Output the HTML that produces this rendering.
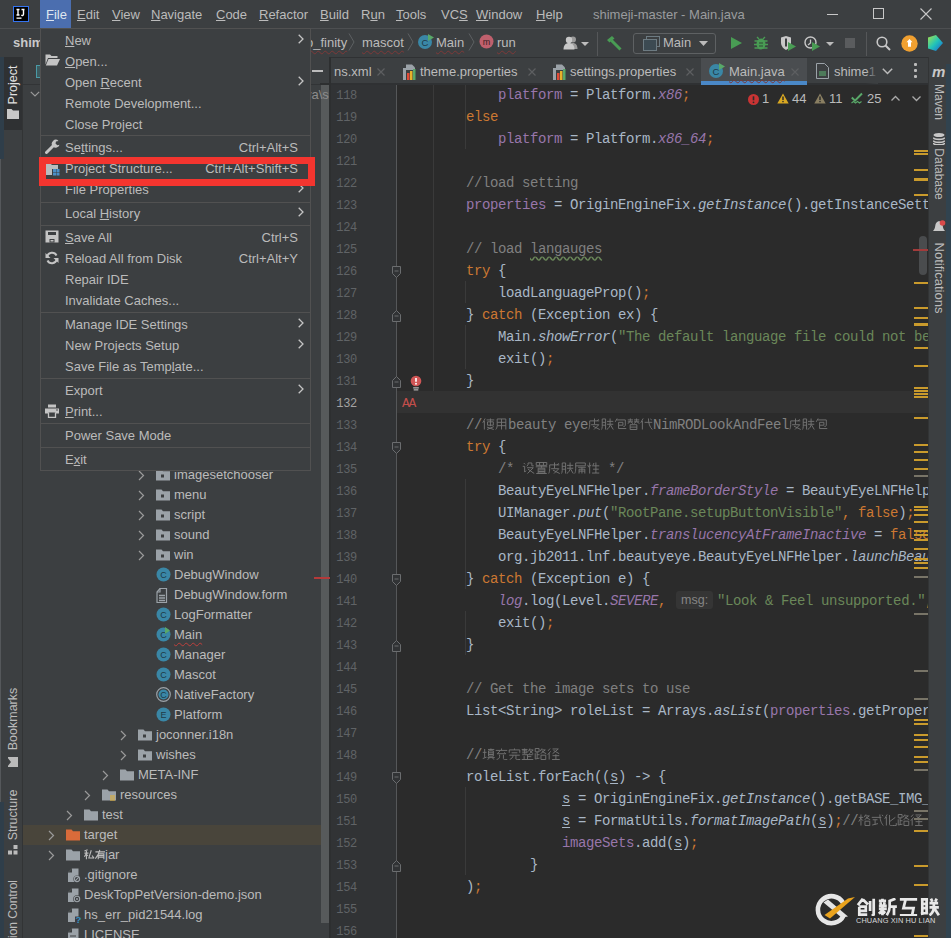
<!DOCTYPE html>
<html><head><meta charset="utf-8">
<style>
*{margin:0;padding:0;box-sizing:border-box}
html,body{width:951px;height:938px;overflow:hidden;background:#3c3f41;font-family:"Liberation Sans",sans-serif;font-size:13px;color:#bbbbbb}
.a{position:absolute}
.t{position:absolute;white-space:pre;line-height:16px}
u{text-decoration:underline;text-underline-offset:1px}
/* bars */
#menubar{left:0;top:0;width:951px;height:28px;background:#3c3f41}
#navbar{left:0;top:28px;width:951px;height:30px;background:#3c3f41;border-top:1px solid #4d4f51;border-bottom:1px solid #2f3133}
#lstrip{left:0;top:57px;width:23px;height:881px;background:#3c3f41;border-right:1px solid #323435}
#proj{left:23px;top:57px;width:306px;height:881px;background:#3c3f41}
#tabs{left:329px;top:58px;width:599px;height:27px;background:#3c3f41;border-bottom:2px solid #2f3133}
#editor{left:329px;top:85px;width:599px;height:853px;background:#2b2b2b;overflow:hidden}
#gutter{left:0;top:0;width:68px;height:853px;background:#313335}
#rstrip{left:928px;top:57px;width:23px;height:881px;background:#3c3f41;border-left:1px solid #323435}
/* code */
.ln{position:absolute;margin-top:2px;left:0;width:28px;text-align:right;font-family:"Liberation Mono",monospace;font-size:12px;letter-spacing:-0.3px;color:#606366;line-height:22px}
.cl{position:absolute;left:73px;white-space:pre;font-family:"Liberation Mono",monospace;font-size:14px;letter-spacing:-0.4px;color:#a9b7c6;line-height:22px}
.k{color:#cc7832}.f{color:#9876aa}.s{color:#6a8759}.c{color:#808080}.i{font-style:italic}
.ln.cur{color:#a4a3a3}
.err{color:#c24e4b;letter-spacing:-1.2px;font-size:13px}
.hint{display:inline-block;margin:0 4px 0 10px;width:37px;height:18px;line-height:18px;vertical-align:1px;text-align:center;letter-spacing:0;background:#353535;color:#858585;font-family:"Liberation Sans",sans-serif;font-size:12.5px;border-radius:3px}
.ul{text-decoration:underline;text-underline-offset:2px}
.wv{text-decoration:underline wavy #6a8759;text-underline-offset:3px}
.cjt{display:inline-block;width:10.5px;height:11px;margin-right:0;vertical-align:-1px;border:1px solid #999;border-width:1px 0;background:linear-gradient(90deg,transparent 4px,#aaa 4px 5px,transparent 5px)}
.cj{display:inline-block;width:13px;height:11px;vertical-align:-1px;background:repeating-linear-gradient(0deg,currentColor 0 1px,transparent 1px 3px);opacity:.55}
/* menu */
#menu{left:40px;top:28px;width:271px;height:443px;background:#3c3f41;border:1px solid #515151}
.mi{position:absolute;left:24px;white-space:pre;line-height:21px;color:#bbbbbb}
.sc{position:absolute;right:12px;white-space:pre;line-height:21px;color:#bbbbbb}
.sep{position:absolute;left:0;width:269px;height:1px;background:#515151}
.arr{position:absolute;left:258px;width:7px;height:9px}
</style></head><body>

<!-- MENU BAR -->
<div id="menubar" class="a">
  <svg class="a" style="left:13px;top:6px" width="16" height="16" viewBox="0 0 16 16"><rect x="0.5" y="0.5" width="15" height="15" fill="#000" stroke="#3574f0" stroke-width="1"/><path d="M3.5 3.5h3M5 3.5v5.5M3.5 9h3M8.5 3.5h3M10.5 3.5v4.5c0 1.5-1 1.8-2.2 1.2" stroke="#fff" stroke-width="1.4" fill="none"/><rect x="3.5" y="11.5" width="5" height="1.3" fill="#fff"/></svg>
  <div class="a" style="left:40px;top:0;width:31px;height:28px;background:#4b6eaf"></div>
  <div class="t" style="left:46px;top:7px;color:#dfe6f0"><u>F</u>ile</div>
  <div class="t" style="left:77px;top:7px"><u>E</u>dit</div>
  <div class="t" style="left:112px;top:7px"><u>V</u>iew</div>
  <div class="t" style="left:151px;top:7px"><u>N</u>avigate</div>
  <div class="t" style="left:216px;top:7px"><u>C</u>ode</div>
  <div class="t" style="left:259px;top:7px"><u>R</u>efactor</div>
  <div class="t" style="left:320px;top:7px"><u>B</u>uild</div>
  <div class="t" style="left:361px;top:7px">R<u>u</u>n</div>
  <div class="t" style="left:396px;top:7px"><u>T</u>ools</div>
  <div class="t" style="left:441px;top:7px">VC<u>S</u></div>
  <div class="t" style="left:476px;top:7px"><u>W</u>indow</div>
  <div class="t" style="left:536px;top:7px"><u>H</u>elp</div>
  <div class="t" style="left:593px;top:7px;color:#9a9c9e">shimeji-master - Main.java</div>
</div>

<div id="navbar" class="a"></div>
<div id="lstrip" class="a"></div>
<div id="proj" class="a"></div>
<svg class="a" style="left:138px;top:470px" width="7" height="11" viewBox="0 0 7 11"><path d="M1 1l4.5 4.5L1 10" stroke="#9a9a9a" stroke-width="1.2" fill="none"/></svg>
<div class="a" style="left:156px;top:469px;line-height:0"><svg width="14" height="12" viewBox="0 0 14 12"><path d="M0 0.5h5.5l1.5 1.8H14V11.5H0z" fill="#9ba2a8"/><rect x="5" y="5.5" width="3" height="3" fill="#3c3f41"/></svg></div>
<div class="t" style="left:174px;top:467px;">imagesetchooser</div>
<svg class="a" style="left:138px;top:490px" width="7" height="11" viewBox="0 0 7 11"><path d="M1 1l4.5 4.5L1 10" stroke="#9a9a9a" stroke-width="1.2" fill="none"/></svg>
<div class="a" style="left:156px;top:489px;line-height:0"><svg width="14" height="12" viewBox="0 0 14 12"><path d="M0 0.5h5.5l1.5 1.8H14V11.5H0z" fill="#9ba2a8"/><rect x="5" y="5.5" width="3" height="3" fill="#3c3f41"/></svg></div>
<div class="t" style="left:174px;top:487px;">menu</div>
<svg class="a" style="left:138px;top:510px" width="7" height="11" viewBox="0 0 7 11"><path d="M1 1l4.5 4.5L1 10" stroke="#9a9a9a" stroke-width="1.2" fill="none"/></svg>
<div class="a" style="left:156px;top:509px;line-height:0"><svg width="14" height="12" viewBox="0 0 14 12"><path d="M0 0.5h5.5l1.5 1.8H14V11.5H0z" fill="#9ba2a8"/><rect x="5" y="5.5" width="3" height="3" fill="#3c3f41"/></svg></div>
<div class="t" style="left:174px;top:507px;">script</div>
<svg class="a" style="left:138px;top:530px" width="7" height="11" viewBox="0 0 7 11"><path d="M1 1l4.5 4.5L1 10" stroke="#9a9a9a" stroke-width="1.2" fill="none"/></svg>
<div class="a" style="left:156px;top:529px;line-height:0"><svg width="14" height="12" viewBox="0 0 14 12"><path d="M0 0.5h5.5l1.5 1.8H14V11.5H0z" fill="#9ba2a8"/><rect x="5" y="5.5" width="3" height="3" fill="#3c3f41"/></svg></div>
<div class="t" style="left:174px;top:527px;">sound</div>
<svg class="a" style="left:138px;top:550px" width="7" height="11" viewBox="0 0 7 11"><path d="M1 1l4.5 4.5L1 10" stroke="#9a9a9a" stroke-width="1.2" fill="none"/></svg>
<div class="a" style="left:156px;top:549px;line-height:0"><svg width="14" height="12" viewBox="0 0 14 12"><path d="M0 0.5h5.5l1.5 1.8H14V11.5H0z" fill="#9ba2a8"/><rect x="5" y="5.5" width="3" height="3" fill="#3c3f41"/></svg></div>
<div class="t" style="left:174px;top:547px;">win</div>
<div class="a" style="left:156px;top:567px;line-height:0"><svg width="15" height="15" viewBox="0 0 15 15"><circle cx="7.5" cy="7.5" r="7" fill="#3a87a6"/><text x="7.5" y="11" text-anchor="middle" font-family="Liberation Sans" font-size="9" fill="#1f3a46">C</text></svg></div>
<div class="t" style="left:174px;top:567px;">DebugWindow</div>
<div class="a" style="left:156px;top:588px;line-height:0"><svg width="14" height="15" viewBox="0 0 14 15"><path d="M4 0.5h6.5V14.5H1V4z" fill="none" stroke="#9ba2a8" stroke-width="1.2"/><path d="M1 4h3V0.5" fill="none" stroke="#9ba2a8" stroke-width="1.2"/><path d="M3 7.5h6M3 10h6M3 12.5h6" stroke="#9ba2a8" stroke-width="1.4"/></svg></div>
<div class="t" style="left:174px;top:587px;">DebugWindow.form</div>
<div class="a" style="left:156px;top:607px;line-height:0"><svg width="15" height="15" viewBox="0 0 15 15"><circle cx="7.5" cy="7.5" r="7" fill="#3a87a6"/><text x="7.5" y="11" text-anchor="middle" font-family="Liberation Sans" font-size="9" fill="#1f3a46">C</text></svg></div>
<div class="t" style="left:174px;top:607px;">LogFormatter</div>
<div class="a" style="left:156px;top:627px;line-height:0"><svg width="15" height="15" viewBox="0 0 15 15"><circle cx="7.5" cy="7.5" r="7" fill="#3a87a6"/><text x="7.5" y="11" text-anchor="middle" font-family="Liberation Sans" font-size="9" fill="#1f3a46">C</text><path d="M9 0l5 3.5-5 3.5z" fill="#59a869"/></svg></div>
<div class="t" style="left:174px;top:627px;text-decoration:underline wavy #bc3f3c;text-underline-offset:3px;text-decoration-thickness:1px">Main</div>
<div class="a" style="left:156px;top:647px;line-height:0"><svg width="15" height="15" viewBox="0 0 15 15"><circle cx="7.5" cy="7.5" r="7" fill="#3a87a6"/><text x="7.5" y="11" text-anchor="middle" font-family="Liberation Sans" font-size="9" fill="#1f3a46">C</text></svg></div>
<div class="t" style="left:174px;top:647px;">Manager</div>
<div class="a" style="left:156px;top:667px;line-height:0"><svg width="15" height="15" viewBox="0 0 15 15"><circle cx="7.5" cy="7.5" r="7" fill="#3a87a6"/><text x="7.5" y="11" text-anchor="middle" font-family="Liberation Sans" font-size="9" fill="#1f3a46">C</text></svg></div>
<div class="t" style="left:174px;top:667px;">Mascot</div>
<div class="a" style="left:156px;top:687px;line-height:0"><svg width="15" height="15" viewBox="0 0 15 15"><circle cx="7.5" cy="7.5" r="6.8" fill="none" stroke="#9ba2a8" stroke-width="1.2"/><circle cx="7.5" cy="7.5" r="5" fill="#3a87a6"/><text x="7.5" y="11" text-anchor="middle" font-family="Liberation Sans" font-size="9" fill="#1f3a46">C</text></svg></div>
<div class="t" style="left:174px;top:687px;">NativeFactory</div>
<div class="a" style="left:156px;top:707px;line-height:0"><svg width="15" height="15" viewBox="0 0 15 15"><circle cx="7.5" cy="7.5" r="7" fill="#3a87a6"/><text x="7.5" y="11" text-anchor="middle" font-family="Liberation Sans" font-size="9" fill="#1f3a46">E</text></svg></div>
<div class="t" style="left:174px;top:707px;">Platform</div>
<svg class="a" style="left:120px;top:730px" width="7" height="11" viewBox="0 0 7 11"><path d="M1 1l4.5 4.5L1 10" stroke="#9a9a9a" stroke-width="1.2" fill="none"/></svg>
<div class="a" style="left:138px;top:729px;line-height:0"><svg width="14" height="12" viewBox="0 0 14 12"><path d="M0 0.5h5.5l1.5 1.8H14V11.5H0z" fill="#9ba2a8"/><rect x="5" y="5.5" width="3" height="3" fill="#3c3f41"/></svg></div>
<div class="t" style="left:156px;top:727px;">joconner.i18n</div>
<svg class="a" style="left:120px;top:750px" width="7" height="11" viewBox="0 0 7 11"><path d="M1 1l4.5 4.5L1 10" stroke="#9a9a9a" stroke-width="1.2" fill="none"/></svg>
<div class="a" style="left:138px;top:749px;line-height:0"><svg width="14" height="12" viewBox="0 0 14 12"><path d="M0 0.5h5.5l1.5 1.8H14V11.5H0z" fill="#9ba2a8"/><rect x="5" y="5.5" width="3" height="3" fill="#3c3f41"/></svg></div>
<div class="t" style="left:156px;top:747px;">wishes</div>
<svg class="a" style="left:102px;top:770px" width="7" height="11" viewBox="0 0 7 11"><path d="M1 1l4.5 4.5L1 10" stroke="#9a9a9a" stroke-width="1.2" fill="none"/></svg>
<div class="a" style="left:120px;top:769px;line-height:0"><svg width="14" height="12" viewBox="0 0 14 12"><path d="M0 0.5h5.5l1.5 1.8H14V11.5H0z" fill="#9ba2a8"/></svg></div>
<div class="t" style="left:138px;top:767px;">META-INF</div>
<svg class="a" style="left:84px;top:790px" width="7" height="11" viewBox="0 0 7 11"><path d="M1 1l4.5 4.5L1 10" stroke="#9a9a9a" stroke-width="1.2" fill="none"/></svg>
<div class="a" style="left:102px;top:789px;line-height:0"><svg width="14" height="12" viewBox="0 0 14 12"><path d="M0 0.5h5.5l1.5 1.8H14V11.5H0z" fill="#9ba2a8"/><path d="M8 7h5M8 9h5M8 11h5" stroke="#e8b12a" stroke-width="1.2"/></svg></div>
<div class="t" style="left:120px;top:787px;">resources</div>
<svg class="a" style="left:66px;top:810px" width="7" height="11" viewBox="0 0 7 11"><path d="M1 1l4.5 4.5L1 10" stroke="#9a9a9a" stroke-width="1.2" fill="none"/></svg>
<div class="a" style="left:84px;top:809px;line-height:0"><svg width="14" height="12" viewBox="0 0 14 12"><path d="M0 0.5h5.5l1.5 1.8H14V11.5H0z" fill="#9ba2a8"/></svg></div>
<div class="t" style="left:102px;top:807px;">test</div>
<div class="a" style="left:23px;top:825px;width:298px;height:20px;background:#49453b"></div>
<svg class="a" style="left:48px;top:830px" width="7" height="11" viewBox="0 0 7 11"><path d="M1 1l4.5 4.5L1 10" stroke="#9a9a9a" stroke-width="1.2" fill="none"/></svg>
<div class="a" style="left:66px;top:829px;line-height:0"><svg width="14" height="12" viewBox="0 0 14 12"><path d="M0 0.5h5.5l1.5 1.8H14V11.5H0z" fill="#d96b3a"/></svg></div>
<div class="t" style="left:84px;top:827px;">target</div>
<svg class="a" style="left:48px;top:850px" width="7" height="11" viewBox="0 0 7 11"><path d="M1 1l4.5 4.5L1 10" stroke="#9a9a9a" stroke-width="1.2" fill="none"/></svg>
<div class="a" style="left:66px;top:849px;line-height:0"><svg width="14" height="12" viewBox="0 0 14 12"><path d="M0 0.5h5.5l1.5 1.8H14V11.5H0z" fill="#9ba2a8"/></svg></div>
<div class="t" style="left:84px;top:847px;"><svg class="" width="10.5" height="11" viewBox="0 0 13 12.5" style="vertical-align:-1px"><path d="M4.5 0.5l-4 1.5M0.5 4.5h5M3 2v10M3 5l-2.5 4M3 6l2 2M9 1l-3 9.5h6.5M10 7.5l2.5 3.5" stroke="#bdbdbd" stroke-width="1.35" fill="none"/></svg><svg class="" width="10.5" height="11" viewBox="0 0 13 12.5" style="vertical-align:-1px"><path d="M0.5 3h12M6 0.5c-1 4-3 8-5.5 11M4 5.5h7v6.5M4 5.5v6.5M4 7.5h7M4 9.5h7" stroke="#bdbdbd" stroke-width="1.35" fill="none"/></svg>jar</div>
<div class="a" style="left:68px;top:868px;line-height:0"><svg width="14" height="15" viewBox="0 0 14 15"><path d="M4 0.5h6.5V14H0V4.5z" fill="#9ba2a8"/><path d="M0 4.5L4 0.5V4.5z" fill="#3c3f41"/><circle cx="9" cy="11" r="3.6" fill="#3c3f41"/><circle cx="9" cy="11" r="2.6" fill="none" stroke="#9ba2a8" stroke-width="1.1"/><path d="M7.2 12.8l3.6-3.6" stroke="#9ba2a8" stroke-width="1.1"/></svg></div>
<div class="t" style="left:84px;top:867px;">.gitignore</div>
<div class="a" style="left:68px;top:888px;line-height:0"><svg width="14" height="15" viewBox="0 0 14 15"><path d="M4 0.5h6.5V14H0V4.5z" fill="#9ba2a8"/><path d="M0 4.5L4 0.5V4.5z" fill="#3c3f41"/><circle cx="9" cy="11" r="3.8" fill="#3c3f41"/><circle cx="9" cy="11" r="2.7" fill="none" stroke="#9ba2a8" stroke-width="1.1"/><circle cx="9" cy="11" r="1" fill="#9ba2a8"/></svg></div>
<div class="t" style="left:84px;top:887px;">DeskTopPetVersion-demo.json</div>
<div class="a" style="left:68px;top:908px;line-height:0"><svg width="14" height="15" viewBox="0 0 14 15"><path d="M4 0.5h6.5V14H0V4.5z" fill="#9ba2a8"/><path d="M0 4.5L4 0.5V4.5z" fill="#3c3f41"/><path d="M7 8.5h7V15H7z" fill="#3c3f41"/><text x="10.5" y="15" text-anchor="middle" font-family="Liberation Sans" font-weight="bold" font-size="9.5" fill="#3592c4">?</text></svg></div>
<div class="t" style="left:84px;top:907px;">hs_err_pid21544.log</div>
<div class="a" style="left:68px;top:928px;line-height:0"><svg width="14" height="15" viewBox="0 0 14 15"><path d="M4 0.5h6.5V14H0V4.5z" fill="#9ba2a8"/><path d="M0 4.5L4 0.5V4.5z" fill="#3c3f41"/><path d="M2 8h6M2 10.5h6" stroke="#3c3f41" stroke-width="1"/></svg></div>
<div class="t" style="left:84px;top:927px;">LICENSE</div>
<div id="tabs" class="a"></div>
<div id="editor" class="a">
  <div id="gutter" class="a"></div>
  <div class="a" style="left:104px;top:0px;width:1px;height:306px;background:#3a3a3a"></div>
<div class="a" style="left:136px;top:0px;width:1px;height:64px;background:#3a3a3a"></div>
<div class="a" style="left:136px;top:196px;width:1px;height:22px;background:#3a3a3a"></div>
<div class="a" style="left:136px;top:240px;width:1px;height:44px;background:#3a3a3a"></div>
<div class="a" style="left:136px;top:394px;width:1px;height:110px;background:#3a3a3a"></div>
<div class="a" style="left:136px;top:526px;width:1px;height:44px;background:#3a3a3a"></div>
<div class="a" style="left:136px;top:702px;width:1px;height:88px;background:#3a3a3a"></div>
<div class="a" style="left:68px;top:306px;width:531px;height:22px;background:#323232"></div>
<div class="ln" style="top:-2px">118</div>
<div class="ln" style="top:20px">119</div>
<div class="ln" style="top:42px">120</div>
<div class="ln" style="top:64px">121</div>
<div class="ln" style="top:86px">122</div>
<div class="ln" style="top:108px">123</div>
<div class="ln" style="top:130px">124</div>
<div class="ln" style="top:152px">125</div>
<div class="ln" style="top:174px">126</div>
<div class="ln" style="top:196px">127</div>
<div class="ln" style="top:218px">128</div>
<div class="ln" style="top:240px">129</div>
<div class="ln" style="top:262px">130</div>
<div class="ln" style="top:284px">131</div>
<div class="ln cur" style="top:306px">132</div>
<div class="ln" style="top:328px">133</div>
<div class="ln" style="top:350px">134</div>
<div class="ln" style="top:372px">135</div>
<div class="ln" style="top:394px">136</div>
<div class="ln" style="top:416px">137</div>
<div class="ln" style="top:438px">138</div>
<div class="ln" style="top:460px">139</div>
<div class="ln" style="top:482px">140</div>
<div class="ln" style="top:504px">141</div>
<div class="ln" style="top:526px">142</div>
<div class="ln" style="top:548px">143</div>
<div class="ln" style="top:570px">144</div>
<div class="ln" style="top:592px">145</div>
<div class="ln" style="top:614px">146</div>
<div class="ln" style="top:636px">147</div>
<div class="ln" style="top:658px">148</div>
<div class="ln" style="top:680px">149</div>
<div class="ln" style="top:702px">150</div>
<div class="ln" style="top:724px">151</div>
<div class="ln" style="top:746px">152</div>
<div class="ln" style="top:768px">153</div>
<div class="ln" style="top:790px">154</div>
<div class="ln" style="top:812px">155</div>
<div class="ln" style="top:834px">156</div>
<div class="cl" style="top:-1px">            <span class="f">platform</span> = Platform.<span class="f i">x86</span><span class="k">;</span></div>
<div class="cl" style="top:21px">        <span class="k">else</span></div>
<div class="cl" style="top:43px">            <span class="f">platform</span> = Platform.<span class="f i">x86_64</span><span class="k">;</span></div>
<div class="cl" style="top:87px">        <span class="c">//load setting</span></div>
<div class="cl" style="top:109px">        <span class="f">properties</span> = OriginEngineFix.<span class="i">getInstance</span>().getInstanceSettings</div>
<div class="cl" style="top:153px">        <span class="c">// load </span><span class="c wv">langauges</span></div>
<div class="cl" style="top:175px">        <span class="k">try</span> {</div>
<div class="cl" style="top:197px">            loadLanguageProp()<span class="k">;</span></div>
<div class="cl" style="top:219px">        } <span class="k">catch</span> (Exception ex) {</div>
<div class="cl" style="top:241px">            Main.<span class="i">showError</span>(<span class="s">"The default language file could not be loaded"</span></div>
<div class="cl" style="top:263px">            exit()<span class="k">;</span></div>
<div class="cl" style="top:285px">        }</div>
<div class="cl" style="top:307px"><span class="err">AA</span></div>
<div class="cl" style="top:329px">        <span class="c">//</span><span class="c" style="opacity:.85"><svg class="" width="13" height="12" viewBox="0 0 13 12.5" style="vertical-align:-1px"><path d="M3 0.5L0.5 5M2.2 3v9M4.5 2h8M5.5 4h6v3.5h-6zM8.5 0.5v8M5 9.5l7 2.5M12 9l-7 3" stroke="currentColor" stroke-width="1.0" fill="none"/></svg><svg class="" width="13" height="12" viewBox="0 0 13 12.5" style="vertical-align:-1px"><path d="M2 1h9v11M2 1v7c0 2-1 3.5-1.5 4M2 4.5h9M2 8h9M6.5 1v11" stroke="currentColor" stroke-width="1.0" fill="none"/></svg></span><span class="c">beauty eye</span><span class="c" style="opacity:.85"><svg class="" width="13" height="12" viewBox="0 0 13 12.5" style="vertical-align:-1px"><path d="M1.5 3h10M1.5 3v4c0 2-.5 4-1 5M6.5 0.5v6M3 7h8l-5 5M5 8.5l7 3.5M9 3l2-1.5" stroke="currentColor" stroke-width="1.0" fill="none"/></svg><svg class="" width="13" height="12" viewBox="0 0 13 12.5" style="vertical-align:-1px"><path d="M1 1h3.5v11M1 1v8c0 1.5-.5 2.5-.7 3M1 4.5h3.5M1 7.5h3.5M6 3.5h6.5M6 6.5h6.5M9.2 0.5v6c0 2-1.5 4.5-3.5 5.5M9.5 7l3 5" stroke="currentColor" stroke-width="1.0" fill="none"/></svg><svg class="" width="13" height="12" viewBox="0 0 13 12.5" style="vertical-align:-1px"><path d="M3 0.5L1 4M2.5 2h9v5.5c0 1-1 1.5-2 1.2M4.5 4.5h4.5v3h-4.5M4.5 4.5v6.5h8" stroke="currentColor" stroke-width="1.0" fill="none"/></svg><svg class="" width="13" height="12" viewBox="0 0 13 12.5" style="vertical-align:-1px"><path d="M0.5 2h5.5M0.5 4h5.5M3.2 0.5v2.5l-2.5 3M3.5 3.5l2.5 2.5M7 2h5.5M7 4h5.5M9.7 0.5v2.5l-2.5 3M10 3.5l2.5 2.5M3 7h7v5h-7zM3 9.5h7" stroke="currentColor" stroke-width="1.0" fill="none"/></svg><svg class="" width="13" height="12" viewBox="0 0 13 12.5" style="vertical-align:-1px"><path d="M3 0.5L0.5 5M2.2 3v9M4.5 4.5h8M8.5 0.5c0 5 1.5 9 4 11.5M10.5 1l1.5 1" stroke="currentColor" stroke-width="1.0" fill="none"/></svg></span><span class="c">NimRODLookAndFeel</span><span class="c" style="opacity:.85"><svg class="" width="13" height="12" viewBox="0 0 13 12.5" style="vertical-align:-1px"><path d="M1.5 3h10M1.5 3v4c0 2-.5 4-1 5M6.5 0.5v6M3 7h8l-5 5M5 8.5l7 3.5M9 3l2-1.5" stroke="currentColor" stroke-width="1.0" fill="none"/></svg><svg class="" width="13" height="12" viewBox="0 0 13 12.5" style="vertical-align:-1px"><path d="M1 1h3.5v11M1 1v8c0 1.5-.5 2.5-.7 3M1 4.5h3.5M1 7.5h3.5M6 3.5h6.5M6 6.5h6.5M9.2 0.5v6c0 2-1.5 4.5-3.5 5.5M9.5 7l3 5" stroke="currentColor" stroke-width="1.0" fill="none"/></svg><svg class="" width="13" height="12" viewBox="0 0 13 12.5" style="vertical-align:-1px"><path d="M3 0.5L1 4M2.5 2h9v5.5c0 1-1 1.5-2 1.2M4.5 4.5h4.5v3h-4.5M4.5 4.5v6.5h8" stroke="currentColor" stroke-width="1.0" fill="none"/></svg></span></div>
<div class="cl" style="top:351px">        <span class="k">try</span> {</div>
<div class="cl" style="top:373px">            <span class="c">/* </span><span class="c" style="opacity:.85"><svg class="" width="13" height="12" viewBox="0 0 13 12.5" style="vertical-align:-1px"><path d="M1.5 1l1.5 1.5M0.5 4.5h2v6l1.5-1.5M6 1h4v3h2M6 1v2l-1.5 1.5M5 6h6.5l-6 6M6 7.5l6.5 4.5" stroke="currentColor" stroke-width="1.0" fill="none"/></svg><svg class="" width="13" height="12" viewBox="0 0 13 12.5" style="vertical-align:-1px"><path d="M1 0.5h11v3h-11zM4.5 0.5v3M8.5 0.5v3M0.5 5h12M6.5 4v2M3 6.5h7v5h-7zM3 8.2h7M3 9.9h7M1 12h11" stroke="currentColor" stroke-width="1.0" fill="none"/></svg><svg class="" width="13" height="12" viewBox="0 0 13 12.5" style="vertical-align:-1px"><path d="M1.5 3h10M1.5 3v4c0 2-.5 4-1 5M6.5 0.5v6M3 7h8l-5 5M5 8.5l7 3.5M9 3l2-1.5" stroke="currentColor" stroke-width="1.0" fill="none"/></svg><svg class="" width="13" height="12" viewBox="0 0 13 12.5" style="vertical-align:-1px"><path d="M1 1h3.5v11M1 1v8c0 1.5-.5 2.5-.7 3M1 4.5h3.5M1 7.5h3.5M6 3.5h6.5M6 6.5h6.5M9.2 0.5v6c0 2-1.5 4.5-3.5 5.5M9.5 7l3 5" stroke="currentColor" stroke-width="1.0" fill="none"/></svg><svg class="" width="13" height="12" viewBox="0 0 13 12.5" style="vertical-align:-1px"><path d="M1.5 1h10v3h-10M1.5 1v6c0 2-.5 4-1 5M4 5.5h8M5 7.5h6v4.5M5 7.5v4.5M8 5.5v6.5M5 9.5h6" stroke="currentColor" stroke-width="1.0" fill="none"/></svg><svg class="" width="13" height="12" viewBox="0 0 13 12.5" style="vertical-align:-1px"><path d="M2.5 0.5v11.5M0.5 3l1 2.5M4 3l-1 1.5M7 1l-1.5 3.5M6 4h6.5M6 7.5h6M5 11.5h7.5M9 0.5v11" stroke="currentColor" stroke-width="1.0" fill="none"/></svg></span><span class="c"> */</span></div>
<div class="cl" style="top:395px">            BeautyEyeLNFHelper.<span class="f i">frameBorderStyle</span> = BeautyEyeLNFHelper.FrameBorderStyle</div>
<div class="cl" style="top:417px">            UIManager.<span class="i">put</span>(<span class="s">"RootPane.setupButtonVisible"</span><span class="k">, false</span>)<span class="k">;</span></div>
<div class="cl" style="top:439px">            BeautyEyeLNFHelper.<span class="f i">translucencyAtFrameInactive</span> = <span class="k">false;</span></div>
<div class="cl" style="top:461px">            org.jb2011.lnf.beautyeye.BeautyEyeLNFHelper.<span class="i">launchBeautyEyeLNF</span></div>
<div class="cl" style="top:483px">        } <span class="k">catch</span> (Exception e) {</div>
<div class="cl" style="top:505px">            <span class="f i">log</span>.log(Level.<span class="f i">SEVERE</span><span class="k">,</span><span class="hint">msg:</span><span class="s">"Look &amp; Feel unsupported."</span><span class="k">,</span></div>
<div class="cl" style="top:527px">            exit()<span class="k">;</span></div>
<div class="cl" style="top:549px">        }</div>
<div class="cl" style="top:593px">        <span class="c">// Get the image sets to use</span></div>
<div class="cl" style="top:615px">        List&lt;String&gt; roleList = Arrays.<span class="i">asList</span>(<span class="f">properties</span>.getProperty</div>
<div class="cl" style="top:659px">        <span class="c">//</span><span class="c" style="opacity:.85"><svg class="" width="13" height="12" viewBox="0 0 13 12.5" style="vertical-align:-1px"><path d="M0.5 4.5h4M2.5 1v9M0.5 11l4-1.5M6 1.5h6.5M9 0.5v2M6.5 3h5v5.5h-5zM6.5 5h5M6.5 6.8h5M5.5 10h7.5M7.5 10.5l-2 1.5M10.5 10.5l2 1.5" stroke="currentColor" stroke-width="1.0" fill="none"/></svg><svg class="" width="13" height="12" viewBox="0 0 13 12.5" style="vertical-align:-1px"><path d="M6.5 0.5v1.5M0.5 2.5h12M5 3l-3 3h9M9.5 4.5l1.5 1.5M4.5 7v2c0 2-1.5 2.5-3 3M8.5 7v4c0 1 .5 1 4 1" stroke="currentColor" stroke-width="1.0" fill="none"/></svg><svg class="" width="13" height="12" viewBox="0 0 13 12.5" style="vertical-align:-1px"><path d="M6.5 0.5v1.5M1 5v-3h11v3M3.5 5h6M1 7.5h11M5 7.5c0 2.5-1.5 3.5-3.5 4.5M8 7.5v4c0 .5.5.5 4.5.5" stroke="currentColor" stroke-width="1.0" fill="none"/></svg><svg class="" width="13" height="12" viewBox="0 0 13 12.5" style="vertical-align:-1px"><path d="M0.5 1.5h6M3.5 0.5v5.5M1 3h5v2h-5M9 0.5l-1.5 3M8 2h4.5l-4 4M9 3l3.5 3M1 7h11M6.5 7v4.5M6.5 9h4M3 8.5v3M0.5 12h12" stroke="currentColor" stroke-width="1.0" fill="none"/></svg><svg class="" width="13" height="12" viewBox="0 0 13 12.5" style="vertical-align:-1px"><path d="M1 0.5h4v3.5h-4zM3 4v7M3 7h2.5M1 5.5v6l4.5-1M8 0.5l-2 3M7.5 2h4l-5 4M8 3.5l4.5 2.5M7 7.5h5v4.5h-5z" stroke="currentColor" stroke-width="1.0" fill="none"/></svg><svg class="" width="13" height="12" viewBox="0 0 13 12.5" style="vertical-align:-1px"><path d="M3 0.5L0.8 3M3.5 3.5L0.5 7M2 5.5v6.5M5.5 1h6l-6 5M6.5 2.5l6 3.5M5.5 8h7M9 6.5v5M5 12h8" stroke="currentColor" stroke-width="1.0" fill="none"/></svg></span></div>
<div class="cl" style="top:681px">        roleList.forEach((<span class="ul">s</span>) -&gt; {</div>
<div class="cl" style="top:703px">                    <span class="ul">s</span> = OriginEngineFix.<span class="i">getInstance</span>().getBASE_IMG_DIR</div>
<div class="cl" style="top:725px">                    <span class="ul">s</span> = FormatUtils.<span class="i">formatImagePath</span>(<span class="ul">s</span>)<span class="k">;</span><span class="c">//</span><span class="c" style="opacity:.85"><svg class="" width="13" height="12" viewBox="0 0 13 12.5" style="vertical-align:-1px"><path d="M0.5 3.5h4.5M2.8 0.5v11.5M2.8 4l-2.3 4M3 5l2 2M8 0.5l-2 3M7.5 2h4l-5 4M8 3.5l4.5 2.5M7 7.5h5v4.5h-5z" stroke="currentColor" stroke-width="1.0" fill="none"/></svg><svg class="" width="13" height="12" viewBox="0 0 13 12.5" style="vertical-align:-1px"><path d="M0.5 3.5h10M9 0.5c0 6 1.5 9 3.5 11.5M11 1l1.5 1M1.5 6h5M4 6v5M1 11.5l6-1.5" stroke="currentColor" stroke-width="1.0" fill="none"/></svg><svg class="" width="13" height="12" viewBox="0 0 13 12.5" style="vertical-align:-1px"><path d="M3 0.5L0.5 5M2.2 3v9M5.5 1v10c0 1 .5 1 7 1v-2.5M11.5 3.5l-6 4.5" stroke="currentColor" stroke-width="1.0" fill="none"/></svg><svg class="" width="13" height="12" viewBox="0 0 13 12.5" style="vertical-align:-1px"><path d="M1 0.5h4v3.5h-4zM3 4v7M3 7h2.5M1 5.5v6l4.5-1M8 0.5l-2 3M7.5 2h4l-5 4M8 3.5l4.5 2.5M7 7.5h5v4.5h-5z" stroke="currentColor" stroke-width="1.0" fill="none"/></svg><svg class="" width="13" height="12" viewBox="0 0 13 12.5" style="vertical-align:-1px"><path d="M3 0.5L0.8 3M3.5 3.5L0.5 7M2 5.5v6.5M5.5 1h6l-6 5M6.5 2.5l6 3.5M5.5 8h7M9 6.5v5M5 12h8" stroke="currentColor" stroke-width="1.0" fill="none"/></svg></span></div>
<div class="cl" style="top:747px">                    <span class="f">imageSets</span>.add(<span class="ul">s</span>)<span class="k">;</span></div>
<div class="cl" style="top:769px">                }</div>
<div class="cl" style="top:791px">        )<span class="k">;</span></div>
</div>
<div class="a" style="left:329px;top:57px;width:2px;height:881px;background:#2d2f30"></div>
<div class="a" style="left:396px;top:85px;width:1px;height:853px;background:#555759"></div>
<svg class="a" style="left:392px;top:266px" width="9" height="12" viewBox="0 0 9 12"><path d="M0.5 0.5h8v7l-4 4l-4-4z" fill="#313335" stroke="#6b6d6f" stroke-width="1"/><path d="M2.5 5h4" stroke="#6b6d6f" stroke-width="1"/></svg>
<svg class="a" style="left:392px;top:310px" width="9" height="12" viewBox="0 0 9 12"><path d="M0.5 11.5h8v-7l-4-4l-4 4z" fill="#313335" stroke="#6b6d6f" stroke-width="1"/><path d="M2.5 6h4" stroke="#6b6d6f" stroke-width="1"/></svg>
<svg class="a" style="left:392px;top:376px" width="9" height="12" viewBox="0 0 9 12"><path d="M0.5 11.5h8v-7l-4-4l-4 4z" fill="#313335" stroke="#6b6d6f" stroke-width="1"/><path d="M2.5 6h4" stroke="#6b6d6f" stroke-width="1"/></svg>
<svg class="a" style="left:392px;top:442px" width="9" height="12" viewBox="0 0 9 12"><path d="M0.5 0.5h8v7l-4 4l-4-4z" fill="#313335" stroke="#6b6d6f" stroke-width="1"/><path d="M2.5 5h4" stroke="#6b6d6f" stroke-width="1"/></svg>
<svg class="a" style="left:392px;top:574px" width="9" height="12" viewBox="0 0 9 12"><path d="M0.5 0.5h8v7l-4 4l-4-4z" fill="#313335" stroke="#6b6d6f" stroke-width="1"/><path d="M2.5 5h4" stroke="#6b6d6f" stroke-width="1"/></svg>
<svg class="a" style="left:392px;top:640px" width="9" height="12" viewBox="0 0 9 12"><path d="M0.5 11.5h8v-7l-4-4l-4 4z" fill="#313335" stroke="#6b6d6f" stroke-width="1"/><path d="M2.5 6h4" stroke="#6b6d6f" stroke-width="1"/></svg>
<svg class="a" style="left:392px;top:772px" width="9" height="12" viewBox="0 0 9 12"><path d="M0.5 0.5h8v7l-4 4l-4-4z" fill="#313335" stroke="#6b6d6f" stroke-width="1"/><path d="M2.5 5h4" stroke="#6b6d6f" stroke-width="1"/></svg>
<svg class="a" style="left:392px;top:860px" width="9" height="12" viewBox="0 0 9 12"><path d="M0.5 11.5h8v-7l-4-4l-4 4z" fill="#313335" stroke="#6b6d6f" stroke-width="1"/><path d="M2.5 6h4" stroke="#6b6d6f" stroke-width="1"/></svg>
<svg class="a" style="left:410px;top:375px" width="12" height="16" viewBox="0 0 12 16"><circle cx="6" cy="6" r="5.3" fill="#d05656"/><path d="M6 3v3.8" stroke="#fff" stroke-width="1.7"/><circle cx="6" cy="8.7" r="0.95" fill="#fff"/><path d="M3.2 12.9h5.6M3.7 14.9h4.6" stroke="#d8d8d8" stroke-width="1"/></svg>
<div class="a" style="left:321px;top:85px;width:8px;height:838px;background:rgba(255,255,255,0.14);border-radius:0"></div>
<div class="a" style="left:314px;top:577px;width:16px;height:2px;background:#b53a3a"></div>
<div class="a" style="left:914px;top:150px;width:14px;height:2px;background:#c99a2c"></div>
<div class="a" style="left:914px;top:153px;width:14px;height:2px;background:#c99a2c"></div>
<div class="a" style="left:914px;top:169px;width:14px;height:2px;background:#c99a2c"></div>
<div class="a" style="left:914px;top:178px;width:14px;height:3px;background:#c99a2c"></div>
<div class="a" style="left:914px;top:194px;width:14px;height:2px;background:#c99a2c"></div>
<div class="a" style="left:914px;top:282px;width:14px;height:2px;background:#c99a2c"></div>
<div class="a" style="left:914px;top:307px;width:14px;height:2px;background:#c99a2c"></div>
<div class="a" style="left:914px;top:317px;width:14px;height:2px;background:#c99a2c"></div>
<div class="a" style="left:914px;top:323px;width:14px;height:3px;background:#c99a2c"></div>
<div class="a" style="left:914px;top:347px;width:14px;height:2px;background:#c99a2c"></div>
<div class="a" style="left:914px;top:365px;width:14px;height:2px;background:#c99a2c"></div>
<div class="a" style="left:914px;top:387px;width:14px;height:2px;background:#c99a2c"></div>
<div class="a" style="left:914px;top:390px;width:14px;height:2px;background:#c99a2c"></div>
<div class="a" style="left:914px;top:393px;width:14px;height:2px;background:#c99a2c"></div>
<div class="a" style="left:914px;top:396px;width:14px;height:2px;background:#c99a2c"></div>
<div class="a" style="left:914px;top:417px;width:14px;height:2px;background:#c99a2c"></div>
<div class="a" style="left:914px;top:444px;width:14px;height:2px;background:#c99a2c"></div>
<div class="a" style="left:914px;top:451px;width:14px;height:2px;background:#c99a2c"></div>
<div class="a" style="left:914px;top:459px;width:14px;height:2px;background:#c99a2c"></div>
<div class="a" style="left:914px;top:468px;width:14px;height:2px;background:#c99a2c"></div>
<div class="a" style="left:914px;top:475px;width:14px;height:2px;background:#787467"></div>
<div class="a" style="left:914px;top:506px;width:14px;height:2px;background:#c99a2c"></div>
<div class="a" style="left:914px;top:509px;width:14px;height:2px;background:#c99a2c"></div>
<div class="a" style="left:914px;top:514px;width:14px;height:2px;background:#c99a2c"></div>
<div class="a" style="left:914px;top:521px;width:14px;height:2px;background:#c99a2c"></div>
<div class="a" style="left:914px;top:530px;width:14px;height:2px;background:#c99a2c"></div>
<div class="a" style="left:914px;top:534px;width:14px;height:2px;background:#c99a2c"></div>
<div class="a" style="left:914px;top:539px;width:14px;height:2px;background:#c99a2c"></div>
<div class="a" style="left:914px;top:548px;width:14px;height:2px;background:#c99a2c"></div>
<div class="a" style="left:914px;top:558px;width:14px;height:2px;background:#c99a2c"></div>
<div class="a" style="left:914px;top:562px;width:14px;height:2px;background:#c99a2c"></div>
<div class="a" style="left:914px;top:567px;width:14px;height:2px;background:#c99a2c"></div>
<div class="a" style="left:914px;top:576px;width:14px;height:2px;background:#787467"></div>
<div class="a" style="left:914px;top:613px;width:14px;height:2px;background:#787467"></div>
<div class="a" style="left:914px;top:670px;width:14px;height:2px;background:#787467"></div>
<div class="a" style="left:914px;top:698px;width:14px;height:2px;background:#787467"></div>
<div class="a" style="left:914px;top:719px;width:14px;height:2px;background:#c99a2c"></div>
<div class="a" style="left:914px;top:723px;width:14px;height:2px;background:#c99a2c"></div>
<div class="a" style="left:914px;top:734px;width:14px;height:2px;background:#c99a2c"></div>
<div class="a" style="left:914px;top:739px;width:14px;height:2px;background:#c99a2c"></div>
<div class="a" style="left:914px;top:746px;width:14px;height:2px;background:#c99a2c"></div>
<div class="a" style="left:914px;top:756px;width:14px;height:2px;background:#c99a2c"></div>
<div class="a" style="left:914px;top:761px;width:14px;height:2px;background:#c99a2c"></div>
<div class="a" style="left:914px;top:769px;width:14px;height:2px;background:#787467"></div>
<div class="a" style="left:914px;top:810px;width:14px;height:2px;background:#787467"></div>
<div class="a" style="left:914px;top:818px;width:14px;height:2px;background:#787467"></div>
<div class="a" style="left:914px;top:830px;width:14px;height:2px;background:#c99a2c"></div>
<div class="a" style="left:914px;top:865px;width:14px;height:2px;background:#c99a2c"></div>
<div class="a" style="left:914px;top:884px;width:14px;height:2px;background:#c99a2c"></div>
<div class="a" style="left:914px;top:935px;width:14px;height:2px;background:#c99a2c"></div>
<div class="a" style="left:919px;top:236px;width:8px;height:39px;background:#4e5052;border-radius:4px;opacity:.9"></div>
<div class="a" style="left:913px;top:249px;width:15px;height:2px;background:#a23b3b"></div>
<svg class="a" style="left:748px;top:94px" width="11" height="11" viewBox="0 0 11 11"><circle cx="5.5" cy="5.5" r="5.5" fill="#c93434"/><path d="M5.5 2.3v4" stroke="#2b2b2b" stroke-width="1.6"/><circle cx="5.5" cy="8.3" r="0.9" fill="#2b2b2b"/></svg>
<div class="t" style="left:762px;top:91px;color:#bbbbbb">1</div>
<svg class="a" style="left:777px;top:93px" width="12" height="11" viewBox="0 0 12 11"><path d="M6 0.5L11.7 10.5H0.3z" fill="#d9a822"/><path d="M6 3.5v3.5" stroke="#2b2b2b" stroke-width="1.5"/><circle cx="6" cy="8.6" r="0.8" fill="#2b2b2b"/></svg>
<div class="t" style="left:792px;top:91px;color:#bbbbbb">44</div>
<svg class="a" style="left:814px;top:93px" width="12" height="11" viewBox="0 0 12 11"><path d="M6 0.5L11.7 10.5H0.3z" fill="#8a7f62"/><path d="M6 3.5v3.5" stroke="#2b2b2b" stroke-width="1.5"/><circle cx="6" cy="8.6" r="0.8" fill="#2b2b2b"/></svg>
<div class="t" style="left:829px;top:91px;color:#bbbbbb">11</div>
<svg class="a" style="left:851px;top:92px" width="12" height="13" viewBox="0 0 12 13"><path d="M0.8 5.5l3.2 3.2L11 1.5" stroke="#59a869" stroke-width="2" fill="none"/><path d="M0.5 11l2-1.5 2 1.5 2-1.5 2 1.5 2-1.5" stroke="#59a869" stroke-width="1.1" fill="none"/></svg>
<div class="t" style="left:867px;top:91px;color:#bbbbbb">25</div>
<svg class="a" style="left:891px;top:95px" width="9" height="6" viewBox="0 0 9 6"><path d="M0.5 5.5l4-4 4 4" stroke="#aaaaaa" stroke-width="1.3" fill="none"/></svg>
<svg class="a" style="left:912px;top:96px" width="9" height="6" viewBox="0 0 9 6"><path d="M0.5 0.5l4 4 4-4" stroke="#aaaaaa" stroke-width="1.3" fill="none"/></svg>
<div id="rstrip" class="a"></div>

<div class="a" style="left:827px;top:14px;width:11px;height:1px;background:#c8c8c8"></div>
<div class="a" style="left:873px;top:8px;width:11px;height:11px;border:1px solid #c8c8c8"></div>
<svg class="a" style="left:920px;top:8px" width="12" height="12" viewBox="0 0 12 12"><path d="M0.5 0.5l11 11M11.5 0.5l-11 11" stroke="#c8c8c8" stroke-width="1.1"/></svg>
<div class="t" style="left:13px;top:35px;font-weight:bold;color:#c9c9c9">shimeji-master</div>
<div class="t" style="left:306px;top:35px;text-decoration:underline wavy #7d3838;text-underline-offset:3px;text-decoration-thickness:1px;">o_finity</div>
<svg class="a" style="left:348px;top:33px" width="7" height="18" viewBox="0 0 7 18"><path d="M1 0.5l5 8.5-5 8.5" stroke="#5e6163" stroke-width="1" fill="none"/></svg>
<svg class="a" style="left:407px;top:33px" width="7" height="18" viewBox="0 0 7 18"><path d="M1 0.5l5 8.5-5 8.5" stroke="#5e6163" stroke-width="1" fill="none"/></svg>
<svg class="a" style="left:468px;top:33px" width="7" height="18" viewBox="0 0 7 18"><path d="M1 0.5l5 8.5-5 8.5" stroke="#5e6163" stroke-width="1" fill="none"/></svg>
<div class="t" style="left:362px;top:35px;text-decoration:underline wavy #7d3838;text-underline-offset:3px;text-decoration-thickness:1px;">mascot</div>
<svg class="a" style="left:418px;top:34px" width="16" height="15" viewBox="0 0 16 15"><circle cx="7" cy="8" r="7" fill="#3a87a6"/><text x="7" y="11.5" text-anchor="middle" font-family="Liberation Sans" font-size="9.5" fill="#1f3a46">C</text><path d="M10 0l6 3.5-6 3.5z" fill="#59a869"/></svg>
<div class="t" style="left:436px;top:35px;text-decoration:underline wavy #7d3838;text-underline-offset:3px;text-decoration-thickness:1px;">Main</div>
<svg class="a" style="left:479px;top:34px" width="15" height="15" viewBox="0 0 15 15"><circle cx="7.5" cy="7.5" r="7" fill="#c0606d"/><text x="7.5" y="11" text-anchor="middle" font-family="Liberation Sans" font-size="9" fill="#3a1f24">m</text></svg>
<div class="t" style="left:497px;top:35px;text-decoration:underline wavy #7d3838;text-underline-offset:3px;text-decoration-thickness:1px;">run</div>
<svg class="a" style="left:563px;top:36px" width="27" height="14" viewBox="0 0 27 14"><circle cx="10" cy="3.5" r="3" fill="#9a9a9a"/><path d="M5.5 13c0-4 2-6 4.5-6s4.5 2 4.5 6z" fill="#9a9a9a"/><circle cx="6" cy="4" r="3.2" fill="#c8c8c8"/><path d="M0.5 13.5c0-4.5 2.5-6.5 5.5-6.5s5.5 2 5.5 6.5z" fill="#c8c8c8"/><path d="M18 6h8l-4 4z" fill="#bdbdbd"/></svg>
<div class="a" style="left:597px;top:32px;width:1px;height:24px;background:#555759"></div>
<svg class="a" style="left:606px;top:35px" width="16" height="16" viewBox="0 0 16 16"><path d="M1 5l5-4 2.5 2.5-5 4z" fill="#499c54"/><path d="M5.5 5.5l9 9" stroke="#499c54" stroke-width="3"/></svg>
<div class="a" style="left:633px;top:33px;width:83px;height:21px;border:1px solid #5e6163;border-radius:3px"></div>
<svg class="a" style="left:643px;top:36px" width="17" height="15" viewBox="0 0 17 15"><rect x="3.5" y="0.5" width="13" height="10" fill="none" stroke="#6d7b82" stroke-width="1"/><rect x="0.5" y="3.5" width="13" height="11" fill="#3c4a52" stroke="#6d7b82" stroke-width="1"/></svg>
<div class="t" style="left:663px;top:35px;">Main</div>
<svg class="a" style="left:699px;top:41px" width="9" height="5" viewBox="0 0 9 5"><path d="M0 0h9l-4.5 5z" fill="#bbbbbb"/></svg>
<svg class="a" style="left:731px;top:37px" width="11" height="12" viewBox="0 0 11 12"><path d="M0 0l11 6-11 6z" fill="#499c54"/></svg>
<svg class="a" style="left:754px;top:36px" width="14" height="14" viewBox="0 0 14 14"><ellipse cx="7" cy="8" rx="4.5" ry="5.5" fill="#499c54"/><path d="M0.5 5h13M0 8.5h14M0.5 12h13M3 1l2 2M11 1l-2 2" stroke="#499c54" stroke-width="1.3"/><path d="M5 7h4M5 10h4" stroke="#2f4a33" stroke-width="1.1"/></svg>
<svg class="a" style="left:780px;top:36px" width="16" height="15" viewBox="0 0 16 15"><path d="M1 1.5l5-1.5 5 1.5v5c0 4-3 6.5-5 7.5-2-1-5-3.5-5-7.5z" fill="#c8c8c8"/><path d="M6 2.5v8" stroke="#3c3f41" stroke-width="2"/><path d="M8 6l8 4.5-8 4.5z" fill="#499c54"/></svg>
<svg class="a" style="left:804px;top:36px" width="16" height="15" viewBox="0 0 16 15"><circle cx="6.5" cy="6.5" r="5.5" fill="none" stroke="#c8c8c8" stroke-width="1.4"/><path d="M6.5 3.5v3.5l-2.5 2" stroke="#c8c8c8" stroke-width="1.3" fill="none"/><path d="M8 6l8 4.5-8 4.5z" fill="#499c54"/></svg>
<svg class="a" style="left:826px;top:42px" width="8" height="4" viewBox="0 0 8 4"><path d="M0 0h8l-4 4z" fill="#bbbbbb"/></svg>
<div class="a" style="left:845px;top:38px;width:10px;height:10px;background:#5a5c5e"></div>
<div class="a" style="left:866px;top:32px;width:1px;height:24px;background:#555759"></div>
<svg class="a" style="left:876px;top:36px" width="15" height="15" viewBox="0 0 15 15"><circle cx="6" cy="6" r="4.8" fill="none" stroke="#c8c8c8" stroke-width="1.6"/><path d="M9.5 9.5l4.5 4.5" stroke="#c8c8c8" stroke-width="2"/></svg>
<svg class="a" style="left:901px;top:35px" width="17" height="17" viewBox="0 0 17 17"><circle cx="8.5" cy="8.5" r="8.2" fill="#f0a030"/><path d="M8.5 4l3 3.3H10v4.5H7V7.3H5.5z" fill="#fff"/></svg>
<svg class="a" style="left:927px;top:35px" width="16" height="16" viewBox="0 0 16 16"><defs><linearGradient id="tbg" x1="0" y1="0" x2="1" y2="1"><stop offset="0" stop-color="#a6e34a"/><stop offset=".5" stop-color="#22c4b8"/><stop offset="1" stop-color="#1b5ed8"/></linearGradient></defs><path d="M1 2.5L9 0l7 8-7 8-8-2.5z" fill="url(#tbg)"/></svg>
<div class="a" style="left:312px;top:70px;width:11px;height:2px;background:#bbbbbb"></div>
<div class="t" style="left:334px;top:64px;">ns.xml</div>
<svg class="a" style="left:377px;top:68px" width="8" height="8" viewBox="0 0 8 8"><path d="M0.5 0.5l7 7M7.5 0.5l-7 7" stroke="#5d5f61" stroke-width="1.2"/></svg>
<svg class="a" style="left:403px;top:64px" width="14" height="16" viewBox="0 0 14 16"><path d="M3 0.5h6l3 3V6H3z" fill="#9ba2a8"/><path d="M0 4h3v12H0z" fill="#9ba2a8"/><rect x="4" y="9" width="2.5" height="7" fill="#e24a36"/><rect x="7" y="7" width="2.5" height="9" fill="#e8b12a"/><rect x="10" y="5" width="2.5" height="11" fill="#59a869"/></svg>
<div class="t" style="left:420px;top:64px;">theme.properties</div>
<svg class="a" style="left:528px;top:68px" width="8" height="8" viewBox="0 0 8 8"><path d="M0.5 0.5l7 7M7.5 0.5l-7 7" stroke="#5d5f61" stroke-width="1.2"/></svg>
<svg class="a" style="left:553px;top:64px" width="14" height="16" viewBox="0 0 14 16"><path d="M3 0.5h6l3 3V6H3z" fill="#9ba2a8"/><path d="M0 4h3v12H0z" fill="#9ba2a8"/><rect x="4" y="9" width="2.5" height="7" fill="#e24a36"/><rect x="7" y="7" width="2.5" height="9" fill="#e8b12a"/><rect x="10" y="5" width="2.5" height="11" fill="#59a869"/></svg>
<div class="t" style="left:570px;top:64px;">settings.properties</div>
<svg class="a" style="left:686px;top:68px" width="8" height="8" viewBox="0 0 8 8"><path d="M0.5 0.5l7 7M7.5 0.5l-7 7" stroke="#5d5f61" stroke-width="1.2"/></svg>
<div class="a" style="left:701px;top:58px;width:106px;height:26px;background:#4a4d50"></div>
<div class="a" style="left:701px;top:81px;width:106px;height:4px;background:#4a88c7"></div>
<svg class="a" style="left:709px;top:63px" width="16" height="15" viewBox="0 0 16 15"><circle cx="7" cy="8" r="7" fill="#3a87a6"/><text x="7" y="11.5" text-anchor="middle" font-family="Liberation Sans" font-size="9.5" fill="#1f3a46">C</text><path d="M10 0l6 3.5-6 3.5z" fill="#59a869"/></svg>
<div class="t" style="left:729px;top:64px;text-decoration:underline wavy #7d3838;text-underline-offset:3px;text-decoration-thickness:1px;">Main.java</div>
<svg class="a" style="left:791px;top:68px" width="8" height="8" viewBox="0 0 8 8"><path d="M0.5 0.5l7 7M7.5 0.5l-7 7" stroke="#5d5f61" stroke-width="1.2"/></svg>
<svg class="a" style="left:816px;top:63px" width="13" height="16" viewBox="0 0 13 16"><path d="M0.5 0.5h8l4 4V15.5H0.5z" fill="none" stroke="#9ba2a8" stroke-width="1"/><rect x="3" y="8" width="7" height="5" fill="#4d7a5a"/></svg>
<div class="t" style="left:834px;top:64px;">shime1</div>
<div class="a" style="left:866px;top:58px;width:12px;height:26px;background:linear-gradient(90deg,rgba(60,63,65,0),#3c3f41)"></div>
<svg class="a" style="left:882px;top:68px" width="11" height="7" viewBox="0 0 11 7"><path d="M0.8 0.8l4.7 4.7 4.7-4.7" stroke="#bbbbbb" stroke-width="1.5" fill="none"/></svg>
<div class="a" style="left:914px;top:63px;width:3px;height:3px;background:#bbbbbb;box-shadow:0 6px #bbbbbb,0 12px #bbbbbb;border-radius:1px"></div>
<div class="a" style="left:2px;top:57px;width:20px;height:73px;background:#2f3133"></div>
<div class="t" style="left:13px;top:85px;transform:translate(-50%,-50%) rotate(-90deg);color:#e0e0e0;font-size:12.5px">Project</div>
<svg class="a" style="left:7px;top:109px" width="12" height="10" viewBox="0 0 12 10"><path d="M0 0h4.5l1.5 1.5H12V10H0z" fill="#c8c8c8"/></svg>
<div class="t" style="left:13px;top:719px;transform:translate(-50%,-50%) rotate(-90deg);font-size:12.5px">Bookmarks</div>
<svg class="a" style="left:8px;top:756px" width="10" height="12" viewBox="0 0 10 12"><path d="M0 0h10v12L5 8 0 12z" fill="#bbbbbb" transform="rotate(90 5 6)"/></svg>
<div class="t" style="left:13px;top:815px;transform:translate(-50%,-50%) rotate(-90deg);font-size:12.5px">Structure</div>
<svg class="a" style="left:8px;top:845px" width="10" height="10" viewBox="0 0 10 10"><rect x="5.5" y="0" width="4" height="4" fill="#bbbbbb"/><rect x="0" y="5.5" width="4" height="4" fill="#bbbbbb"/><rect x="5.5" y="5.5" width="4" height="4" fill="#bbbbbb"/></svg>
<div class="t" style="left:13px;top:921px;transform:translate(-50%,-50%) rotate(-90deg);font-size:12px">Version Control</div>
<div class="a" style="left:23px;top:84px;width:298px;height:1px;background:#323436"></div>
<div class="a" style="left:36px;top:65px;width:8px;height:13px;border:1px solid #4a9aa6;background:#3d5a5e"></div>
<svg class="a" style="left:30px;top:91px" width="10" height="6" viewBox="0 0 10 6"><path d="M0.8 0.8l4.2 4.2 4.2-4.2" stroke="#9a9a9a" stroke-width="1.2" fill="none"/></svg>
<div class="a" style="left:311px;top:85px;width:18px;height:20px;overflow:hidden"><div class="t" style="left:-6px;top:2px;color:#8c8c8c">va\s</div></div>
<div class="a" style="left:320px;top:83px;width:9px;height:2px;background:#2d2f30"></div>
<div class="t" style="left:932px;top:64px;font-size:15px;font-weight:bold;font-style:italic;color:#c8c8c8;line-height:16px">m</div>
<div class="t" style="left:939px;top:102px;transform:translate(-50%,-50%) rotate(90deg);font-size:12px">Maven</div>
<svg class="a" style="left:933px;top:133px" width="12" height="12" viewBox="0 0 12 12"><ellipse cx="6" cy="2" rx="5.5" ry="2" fill="#c8c8c8"/><path d="M0.5 4.5c0 2.5 11 2.5 11 0M0.5 7.5c0 2.5 11 2.5 11 0M0.5 10c0 2.5 11 2.5 11 0" stroke="#c8c8c8" stroke-width="1.6" fill="none"/></svg>
<div class="t" style="left:939px;top:174px;transform:translate(-50%,-50%) rotate(90deg);font-size:12px">Database</div>
<svg class="a" style="left:932px;top:220px" width="14" height="13" viewBox="0 0 14 13"><path d="M1 11c2-2 2-4 2.5-6.5S7 1 7 1s3 1 3.5 3.5S11 9 13 11z" fill="#c8c8c8"/><circle cx="10.5" cy="3" r="2.8" fill="#d84a4a"/></svg>
<div class="t" style="left:939px;top:278px;transform:translate(-50%,-50%) rotate(90deg);font-size:13px">Notifications</div>
<div class="a" style="left:946px;top:64px;width:5px;height:874px;background:#31434f"></div>
<div class="a" style="left:0;top:57px;width:4px;height:102px;background:#2f3e4a"></div>
<div class="a" style="left:0;top:159px;width:1px;height:643px;background:#55585b"></div>
<div class="a" style="left:0;top:802px;width:4px;height:136px;background:#2f3e4a"></div>
<svg class="a" style="left:814px;top:892px" width="42" height="36" viewBox="0 0 42 36"><path d="M29.2 11.1A13.5 13.5 0 1 0 29.6 23.5" stroke="#e6e6e6" stroke-width="4.6" fill="none"/><path d="M9.5 10.5L14 7.5L34 24.5L27.5 25.5z" fill="#e4e4e4"/><path d="M10.5 23L16 26.5L41 5L34 6.5z" fill="#e9a21c"/></svg>
<div class="a" style="left:856px;top:898px;line-height:0;white-space:nowrap"><svg class="" width="21" height="18" viewBox="0 0 13 12.5" style="vertical-align:-1px"><path d="M4 0.5L0.5 5M4 1l3.5 3.5M1.5 6h4.5v3h-4.5M1.5 6v5.5h5.5M9 2v7M11.5 0.5v11c0 .5-.5.5-1.5.5" stroke="#e8e8e8" stroke-width="1.9" fill="none"/></svg><svg class="" width="21" height="18" viewBox="0 0 13 12.5" style="vertical-align:-1px"><path d="M3 0.5v1.5M0.5 2h5M1.5 3l.5 2M4.5 3l-.5 2M0.5 5.5h5.5M0.5 7.5h5.5M3 5.5v6.5M3 8.5l-2.5 2.5M3 9l2 1.5M12 0.5l-4 1.5v4c0 3-1 4.5-2 6M8 6h5M11 6v6" stroke="#e8e8e8" stroke-width="1.9" fill="none"/></svg><svg class="" width="21" height="18" viewBox="0 0 13 12.5" style="vertical-align:-1px"><path d="M0.5 1h12M0.5 12h12M4.5 1l-1.5 6h7l-1 5" stroke="#e8e8e8" stroke-width="1.9" fill="none"/></svg><svg class="" width="21" height="18" viewBox="0 0 13 12.5" style="vertical-align:-1px"><path d="M0.5 1h5M1.5 1v10M4.5 1v10.5M1.5 4h3M1.5 7h3M0.5 11l5-1M7.5 0.5l1 2M11.5 0.5l-1 2M6.5 3.5h6M6.5 6.5h6.5M9.5 3.5v3c0 3-1.5 4.5-3 5.5M10 7.5l3 4.5" stroke="#e8e8e8" stroke-width="1.9" fill="none"/></svg></div>
<div class="t" style="left:856px;top:917px;font-size:7.4px;line-height:8px;color:#d8d8d8;letter-spacing:0.1px">CHUANG XIN HU LIAN</div>
<!-- FILE MENU -->
<div id="menu" class="a">
  <div class="mi" style="top:1px"><u>N</u>ew</div>
  <div class="mi" style="top:22px"><u>O</u>pen...</div>
  <div class="mi" style="top:43px">Open <u>R</u>ecent</div>
  <div class="mi" style="top:64px">Remote Development...</div>
  <div class="mi" style="top:85px">Close Project</div>
  <div class="sep" style="top:106px"></div>
  <div class="mi" style="top:108px">Se<u>t</u>tings...</div><div class="sc" style="top:108px">Ctrl+Alt+S</div>
  <div class="mi" style="top:129px">Project Structure...</div><div class="sc" style="top:129px">Ctrl+Alt+Shift+S</div>
  <div class="mi" style="top:150px">File Properties</div>
  <div class="sep" style="top:173px"></div>
  <div class="mi" style="top:174px">Local <u>H</u>istory</div>
  <div class="sep" style="top:196px"></div>
  <div class="mi" style="top:198px"><u>S</u>ave All</div><div class="sc" style="top:198px">Ctrl+S</div>
  <div class="mi" style="top:219px">Reload All from Disk</div><div class="sc" style="top:219px">Ctrl+Alt+Y</div>
  <div class="mi" style="top:240px">Repair IDE</div>
  <div class="mi" style="top:261px">Invalidate Caches...</div>
  <div class="sep" style="top:283px"></div>
  <div class="mi" style="top:285px">Manage IDE Settings</div>
  <div class="mi" style="top:306px">New Projects Setup</div>
  <div class="mi" style="top:327px">Save File as Temp<u>l</u>ate...</div>
  <div class="sep" style="top:349px"></div>
  <div class="mi" style="top:351px">Export</div>
  <div class="mi" style="top:372px"><u>P</u>rint...</div>
  <div class="sep" style="top:394px"></div>
  <div class="mi" style="top:396px">Power Save Mode</div>
  <div class="sep" style="top:418px"></div>
  <div class="mi" style="top:420px">E<u>x</u>it</div>
</div>
<svg class="a" style="left:298px;top:34px" width="6" height="10" viewBox="0 0 6 10"><path d="M0.7 0.7l4.3 4.3-4.3 4.3" stroke="#c4c4c4" stroke-width="1.3" fill="none"/></svg>
<svg class="a" style="left:298px;top:76px" width="6" height="10" viewBox="0 0 6 10"><path d="M0.7 0.7l4.3 4.3-4.3 4.3" stroke="#c4c4c4" stroke-width="1.3" fill="none"/></svg>
<svg class="a" style="left:298px;top:183px" width="6" height="10" viewBox="0 0 6 10"><path d="M0.7 0.7l4.3 4.3-4.3 4.3" stroke="#c4c4c4" stroke-width="1.3" fill="none"/></svg>
<svg class="a" style="left:298px;top:207px" width="6" height="10" viewBox="0 0 6 10"><path d="M0.7 0.7l4.3 4.3-4.3 4.3" stroke="#c4c4c4" stroke-width="1.3" fill="none"/></svg>
<svg class="a" style="left:298px;top:318px" width="6" height="10" viewBox="0 0 6 10"><path d="M0.7 0.7l4.3 4.3-4.3 4.3" stroke="#c4c4c4" stroke-width="1.3" fill="none"/></svg>
<svg class="a" style="left:298px;top:339px" width="6" height="10" viewBox="0 0 6 10"><path d="M0.7 0.7l4.3 4.3-4.3 4.3" stroke="#c4c4c4" stroke-width="1.3" fill="none"/></svg>
<svg class="a" style="left:298px;top:384px" width="6" height="10" viewBox="0 0 6 10"><path d="M0.7 0.7l4.3 4.3-4.3 4.3" stroke="#c4c4c4" stroke-width="1.3" fill="none"/></svg>
<svg class="a" style="left:45px;top:54px" width="15" height="12" viewBox="0 0 15 12"><path d="M0.5 0.5h4.5l1.5 1.5h6V4H3L0.5 10.5z" fill="#c4c4c4"/><path d="M3.5 5h11.5l-3 6.5H0.8z" fill="#c4c4c4"/></svg>
<svg class="a" style="left:45px;top:139px" width="15" height="15" viewBox="0 0 15 15"><path d="M1.5 13.5l7-7" stroke="#c4c4c4" stroke-width="3" stroke-linecap="round"/><path d="M8 7.5a3.8 3.8 0 1 1 5.5-5.5l-2.5 0.5-0.5 2 1.8 1.7 2.2-0.5A3.8 3.8 0 0 1 8 7.5z" fill="#c4c4c4"/></svg>
<svg class="a" style="left:46px;top:163px" width="14" height="13" viewBox="0 0 14 13"><path d="M0 0.5h4.5l1.5 1.5H12V6H6v6H0z" fill="#b9bdbf"/><rect x="7" y="6" width="3" height="3" fill="#4a8fc7"/><rect x="10.5" y="6" width="3" height="3" fill="#4a8fc7"/><rect x="7" y="9.5" width="3" height="3" fill="#4a8fc7"/><rect x="10.5" y="9.5" width="3" height="3" fill="#4a8fc7"/></svg>
<svg class="a" style="left:45px;top:230px" width="14" height="13" viewBox="0 0 14 13"><path d="M0.5 0.5h13v12h-13z" fill="#c4c4c4"/><rect x="3" y="2" width="8" height="3" fill="#3c3f41"/><rect x="4.5" y="9" width="5" height="3.5" fill="#3c3f41"/><rect x="5.5" y="10" width="3" height="1.5" fill="#c4c4c4"/></svg>
<svg class="a" style="left:45px;top:251px" width="14" height="14" viewBox="0 0 14 14"><path d="M11.5 4.5A5 5 0 0 0 2.2 5.5M2.5 9.5a5 5 0 0 0 9.3-1" stroke="#c4c4c4" stroke-width="2" fill="none"/><path d="M0.5 2v5h5z" fill="#c4c4c4"/><path d="M13.5 12V7h-5z" fill="#c4c4c4"/></svg>
<svg class="a" style="left:45px;top:404px" width="14" height="14" viewBox="0 0 14 14"><rect x="3" y="0.5" width="8" height="3" fill="#c4c4c4"/><rect x="0" y="4.5" width="14" height="5" fill="#c4c4c4"/><path d="M3.5 8.5v5h7v-5" stroke="#c4c4c4" stroke-width="1.3" fill="#3c3f41"/><circle cx="12" cy="6" r="0.8" fill="#3c3f41"/></svg>
<div class="a" style="left:39px;top:157px;width:276px;height:29px;border:7px solid #f4352f"></div>

</body></html>
